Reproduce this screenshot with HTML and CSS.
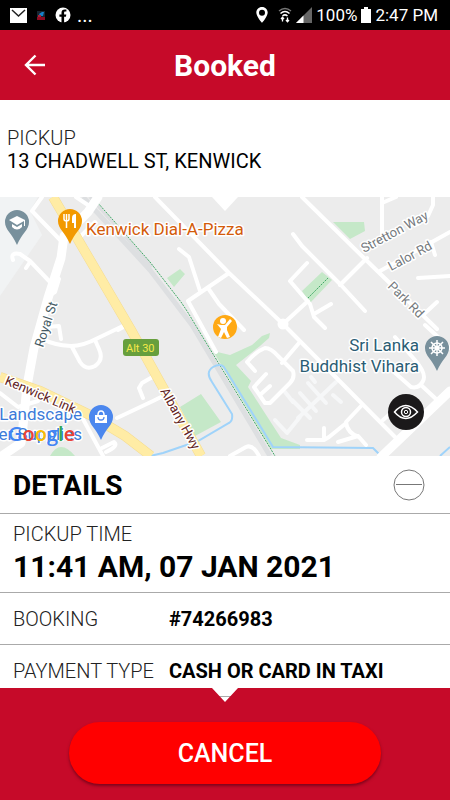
FILE: index.html
```html
<!DOCTYPE html>
<html lang="en">
<head>
<meta charset="utf-8">
<meta name="viewport" content="width=device-width, initial-scale=1">
<title>Booked</title>
<link rel="stylesheet" href="styles.css">
</head>
<body>
<div class="status">
  <div class="status-group">
    <svg class="mail" width="17" height="15" viewBox="0 0 17 15"><path fill="#fff" d="M0 0h17v15H0z"/><path d="M2 2l6.500 6L15 2" fill="none" stroke="#222" stroke-width="1.500"/></svg>
    <svg width="8" height="9" viewBox="0 0 8 9"><path fill="#172531" d="M0 0h8v6H0z"/><path d="M2 3l3-2h2L6 5H3z" fill="#1682cb"/><path d="M1 4h3v2H1z" fill="#a92038"/><path fill="#8e0b22" d="M0 6h8v3H0z"/></svg>
    <svg width="16" height="16" viewBox="0 0 16 16"><circle cx="8" cy="8" r="7.500" fill="#fff"/><path d="M6.500 16V9.800H4.400V7.400h2.100V5.700c0-2.200 1.300-3.300 3.200-3.300l1.700.2v2h-1c-1 0-1.300.5-1.300 1.200v1.600h2.200l-.4 2.400H9.100V16z" fill="#000"/></svg>
    <span class="more">...</span>
  </div>
  <div class="status-group right">
    <svg width="12" height="16" viewBox="0 0 12 16"><path fill="#fff" fill-rule="evenodd" d="M6 0C2.600 0 .3 2.500.3 5.600.3 9.500 6 16 6 16s5.700-6.500 5.700-10.400C11.700 2.500 9.400 0 6 0zm0 2.700a3 3 0 1 1 0 6 3 3 0 0 1 0-6z"/></svg>
    <svg class="wifi" width="14" height="16" viewBox="0 0 14 16" fill="none" stroke="#fff" stroke-width="1.500"><path stroke="#777" d="M1 4q6-5 12 0"/><path d="M2.500 6.500q4.500-4 9 0M4.500 9q2.500-2.200 5 0"/><path d="M4.500 10.500v4M3 12l1.500-1.700L6 12M9.500 10.500v4M8 13l1.500 1.700L11 13" stroke-width="1.300"/></svg>
    <svg width="16" height="16" viewBox="0 0 16 16"><path d="M0 16L16 0v16z" fill="#666"/><path d="M0 16l7.500-7.500V16z" fill="#fff"/></svg>
    <span class="percent">100%</span>
    <svg class="battery" width="10" height="16" viewBox="0 0 10 16"><path fill="#fff" d="M3 0h4v2h3v14H0V2h3z"/></svg>
    <span>2:47 PM</span>
  </div>
</div>

<header class="header">
  <button class="back" aria-label="Back"><svg width="22" height="22" viewBox="0 0 22 22" fill="none" stroke="#fff" stroke-width="2.400"><path d="M21 11H2M11.500 1.500L2 11l9.500 9.500"/></svg></button>
  <h1>Booked</h1>
</header>

<section class="pickup">
  <span class="label">PICKUP</span>
  <span>13 CHADWELL ST, KENWICK</span>
</section>

<section class="map">
  <svg class="map-art" viewBox="0 197 450 259" preserveAspectRatio="xMidYMid slice">
    <path fill="#ececec" d="M0 197h450v259H0z"/>
    <path fill="#f1f3f4" d="M0 197h38l-8 14 12 24L0 296z"/>
    <g fill="#c5e8c8">
      <path d="M167 278l13-9 5 5-11 13zM333 222h31l1 9-15 8zM302 291l20-19 10 8-22 23zM180 407l21-13 20 28-26 14zM50 456q10-18 25 0z"/>
      <path d="M213 351l17 4 22-10 10-9 8-3-1 5-9 8-24 19 15 16-3 6 33 51 19 7v4h-29z"/>
    </g>
    <path class="rail" d="M83 197l67 73 42 55 78 131"/>
    <path class="rail inner" d="M90 197l62 70"/>
    <path class="trail" d="M98 203l52 59 31 40 6 9 26 43 62 102M308 298l20-20"/>
    <g class="canal">
      <path d="M150 456l13-3 35-12 31-18q4-2 3-9l-20-32q-7-10 1-15 7-4 11 0l49 80 100 1 8 8M440 456l10-9"/>
    </g>
    <g class="roads pale">
      <path d="M298 418l38-36M308 383l18 20M300 393l16 18M315 382l-4-5M333 395l8 7M293 402l-8-10M275 420l12 13 13-16M292 400l18 18"/>
    </g>
    <g class="roads">
      <path class="wide" d="M98 197l-10 15-24 24-3 22-13 40-14 50-7 38-4 40-2 17-22 15"/>
      <path d="M42 197l-10 14 33 34M76 197l15 10M95 222l-18 18M13 260q-3-8 7-6l10 7 20 21M30 262l-4 6M59 279l-4 13-5 3M0 377l38 10M38 401l-20 6-18-14"/>
      <path d="M43 339q10 6 28 7 12 0 27-8l27-13M46 327l13-1 2 13M72 347l8 15q6 9 15 4 9-6 4-17l-4-9M127 325l-9 5M156 375l-14 8-3 5 4 10M117 418l36-17 10-5M83 419l20 37M102 448l12-6q5 4-8 10"/>
      <path d="M155 197l74 76 54 51 115 116M179 249l10 8 11 34M229 273l-41 28 28 51M208 288l11 16 25 26M293 234l9 12 38 38 25 27M307 263l-17 18 12 14 8 9 4 13 11 11M314 314l17-10M283 324l25-23"/>
      <path d="M302 197l63 62 72 70M340 285l27-27M382 197v39M382 203l14-6M433 197v8l-5 11-10 8M380 271l52-29 18-10M431 242l4 13M418 278l32-2M423 315l14-13"/>
      <path d="M255 371l-8-9q8-10 18-14 6 0 13 8l15 15q2 7-3 12l-20 20-5 0-11-16 12-13M261 394l9-8M299 343l-17 20M230 456l16-9q7-3 13 9M362 405l-16 17q1 11 13 15l7 8M345 424l-16 13-5 3h-17M324 428v10M338 442l20-6M383 420l7-6M395 337l20 23q12 14 8 21-4 8-12 6l-17-15M421 385l15 14M425 325l25 23"/>
      <circle cx="283" cy="324" r="3.500"/>
      <path class="wide" d="M450 391l-69 66"/>
    </g>
    <g class="highway"><path class="edge" d="M53 197l78 133 70 126M0 377l40 14 50 24 35 21 26 20"/><path d="M53 197l78 133 70 126M0 377l40 14 50 24 35 21 26 20"/></g>

    <rect x="123" y="339" width="36" height="17" rx="3" fill="#679f3d"/>
    <text class="shield" x="126" y="352">Alt 30</text>

    <g class="map-label road-label">
      <text transform="translate(43 348) rotate(-72)">Royal St</text>
      <text class="gray" transform="translate(364 253) rotate(-28)">Stretton Way</text>
      <text class="gray" transform="translate(391 271) rotate(-28)">Lalor Rd</text>
      <text class="gray" transform="translate(387 287) rotate(45)">Park Rd</text>
    </g>
    <g class="map-label">
      <text class="orange" x="86" y="235">Kenwick Dial-A-Pizza</text>
      <text class="teal" x="419" y="351" text-anchor="end">Sri Lanka</text>
      <text class="teal" x="419" y="372" text-anchor="end">Buddhist Vihara</text>
      <text class="blue" x="82" y="420" text-anchor="end">Landscape</text>
      <text class="blue" x="82" y="440" text-anchor="end">er Supplies</text>
    </g>
    <g class="map-label road-label">
      <text class="brown" transform="translate(4 384) rotate(23)">Kenwick Link</text>
      <text class="brown" transform="translate(160 391) rotate(61)">Albany Hwy</text>
    </g>
    <text class="google" x="8" y="441"><tspan fill="#4285f4">G</tspan><tspan fill="#ea4335">o</tspan><tspan fill="#fbbc05">o</tspan><tspan fill="#4285f4">g</tspan><tspan fill="#34a853">l</tspan><tspan fill="#ea4335">e</tspan></text>

    <defs><path id="pin" d="M0-12a12 12 0 0 0-12 12C-12 8-5 11 0 23 5 11 12 8 12 0A12 12 0 0 0 0-12z"/></defs>
    <g transform="translate(17 222)"><use href="#pin" fill="#78909c"/><path fill="#fff" d="M-8-2l8-4 8 4v6H7V-1L0 3zM-5 2l5 3 5-3v3q-5 5-10 0z"/></g>
    <g transform="translate(70 221)"><use href="#pin" fill="#f29900"/><path d="M-6-7v5q0 2 2.500 2T-1-2v-5M-3.500-7V7" fill="none" stroke="#fff" stroke-width="1.500"/><path d="M2-3q0-4 4-4V7H4V2H2z" fill="#fff"/></g>
    <g transform="translate(101 417)"><use href="#pin" fill="#4b87ee"/><path d="M-6-2H6v8H-6z" fill="#fff"/><path d="M-3-2q0-4 3-4t3 4" fill="none" stroke="#fff" stroke-width="1.500"/><path d="M-3 0q0 3 3 3t3-3" fill="none" stroke="#4b87ee" stroke-width="1.300"/></g>
    <g transform="translate(437 348)"><use href="#pin" fill="#78909c"/><g fill="none" stroke="#fff" stroke-width="1.500"><circle r="5"/><circle r="1.500"/><path d="M0-8V8M-8 0H8M-6-6L6 6M6-6L-6 6"/></g></g>
    <g transform="translate(225 327)"><circle r="12" fill="#ffa914"/><circle cx="-2" cy="-6" r="3" fill="#fff"/><path d="M-8-3l4 1h4l5-6 2 2-5 6v3l3 7-3 1-3-6-3 6-3-1 3-8z" fill="#fff"/></g>
  </svg>
  <button class="eye" aria-label="Toggle map view"><svg width="26" height="18" viewBox="0 0 26 18" fill="none" stroke="#fff"><path stroke-width="1.500" d="M1.500 9Q12.500-4 24.500 9 12.500 22 1.500 9z"/><circle cx="13" cy="9" r="4.500" stroke-width="1.500"/><circle cx="13" cy="9" r="1.700"/></svg></button>
</section>

<main class="details">
  <div class="row heading">
    <h2>DETAILS</h2>
    <button class="collapse" aria-label="Collapse details"><svg width="32" height="32" viewBox="0 0 32 32" fill="none" stroke="#777"><circle cx="16" cy="16" r="15"/><path d="M3 15.500h26"/></svg></button>
  </div>
  <div class="row time"><span class="label">PICKUP TIME</span><strong>11:41 AM, 07 JAN 2021</strong></div>
  <div class="row pair"><span class="label">BOOKING</span><strong>#74266983</strong></div>
  <div class="row pair"><span class="label">PAYMENT TYPE</span><strong>CASH OR CARD IN TAXI</strong></div>
</main>

<footer class="footer"><button class="cancel">CANCEL</button></footer>
</body>
</html>
```
FILE: styles.css
```css
* { box-sizing: border-box; }

body {
  margin: 0;
  height: 100vh;
  display: flex;
  flex-direction: column;
  background: #fff;
  color: #000;
  font-family: Roboto, "Liberation Sans", sans-serif;
  font-size: 20px;
}

button { padding: 0; border: 0; background: none; font: inherit; color: inherit; }
svg { display: block; flex: none; }
h1, h2 { margin: 0; font-weight: 700; }

.status {
  flex: none;
  height: 30px;
  padding: 0 12px 0 10px;
  display: flex;
  justify-content: space-between;
  align-items: center;
  background: #000;
  color: #fff;
  font-size: 17px;
}
.status-group { display: flex; align-items: center; gap: 10px; }
.status-group.right { gap: 4px; }
.more { font-size: 20px; line-height: 20px; margin-left: -4px; }
.wifi { margin-left: 6px; }

.header {
  flex: none;
  height: 70px;
  padding: 0 24px;
  display: grid;
  grid-template-columns: 22px 1fr 22px;
  align-items: center;
  background: #c60a29;
  color: #fff;
}
.header h1 { font-size: 30px; text-align: center; }

.pickup {
  flex: none;
  display: flex;
  flex-direction: column;
  padding: 27px 7px 24px;
  line-height: 23px;
}
.label { font-weight: 300; color: #222; }

.map { flex: none; position: relative; aspect-ratio: 450 / 259; }
.map::before {
  content: "";
  position: absolute;
  top: 0;
  left: 50%;
  margin-left: -13px;
  width: 26px;
  height: 14px;
  background: #fff;
  clip-path: polygon(0 0, 100% 0, 50% 100%);
}
.map-art { width: 100%; height: 100%; }
.eye {
  position: absolute;
  right: 26px;
  bottom: 26px;
  width: 36px;
  height: 36px;
  border-radius: 50%;
  background: #1b191a;
  display: grid;
  place-items: center;
}

.roads { fill: none; stroke: #fff; stroke-width: 4; stroke-linejoin: round; stroke-linecap: round; }
.roads .wide { stroke-width: 9; }
.pale { stroke: #f6f7f8; }
.rail { fill: none; stroke: #dddfe1; stroke-width: 5; }
.rail.inner { stroke-width: 3; }
.trail { fill: none; stroke: #41a866; stroke-width: 1; stroke-dasharray: 2 1; }
.canal { fill: none; stroke: #9fd3fa; stroke-width: 2; }
.highway { fill: none; stroke: #ffeca5; stroke-width: 9; }
.highway .edge { stroke: #f5dc91; stroke-width: 10; }

.map-label { font-size: 17px; paint-order: stroke; stroke: #fff; stroke-width: 3; stroke-linejoin: round; }
.road-label { font-size: 13px; fill: #455a64; }
.road-label .gray { fill: #74797d; }
.road-label .brown { fill: #622322; }
.orange { fill: #d35b0a; }
.teal { fill: #2b5d74; }
.blue { fill: #3c7bd9; }
.shield { font-size: 11px; fill: #f5e94a; }
.google { font-family: "Open Sans", sans-serif; font-size: 20px; font-weight: 600; }

.details {
  position: relative;
  flex: 1;
  min-height: 0;
  margin-bottom: -14px;
  overflow-y: auto;
  scrollbar-width: none;
}
.row { padding: 0 13px; border-bottom: 1px solid #aaa; }
.heading { height: 58px; padding-right: 25px; display: flex; justify-content: space-between; align-items: center; }
.heading h2 { font-size: 28px; line-height: 32px; padding-top: 2px; }
.time { padding-top: 8px; height: 79px; display: flex; flex-direction: column; line-height: 24px; }
.time strong { font-size: 30px; line-height: 42px; }
.pair { height: 52px; display: grid; grid-template-columns: 156px 1fr; align-items: center; }

.footer {
  position: relative;
  flex: none;
  height: 112px;
  padding: 34px 69px 0;
  background: #c60a29;
  clip-path: polygon(0 0, calc(50% - 13px) 0, 50% 14px, calc(50% + 13px) 0, 100% 0, 100% 100%, 0 100%);
}
.cancel {
  width: 100%;
  height: 62px;
  border-radius: 31px;
  background: #f00;
  color: #fff;
  font-size: 25px;
  font-weight: 500;
  box-shadow: 0 2px 3px rgb(80 0 20 / 60%);
}
```
